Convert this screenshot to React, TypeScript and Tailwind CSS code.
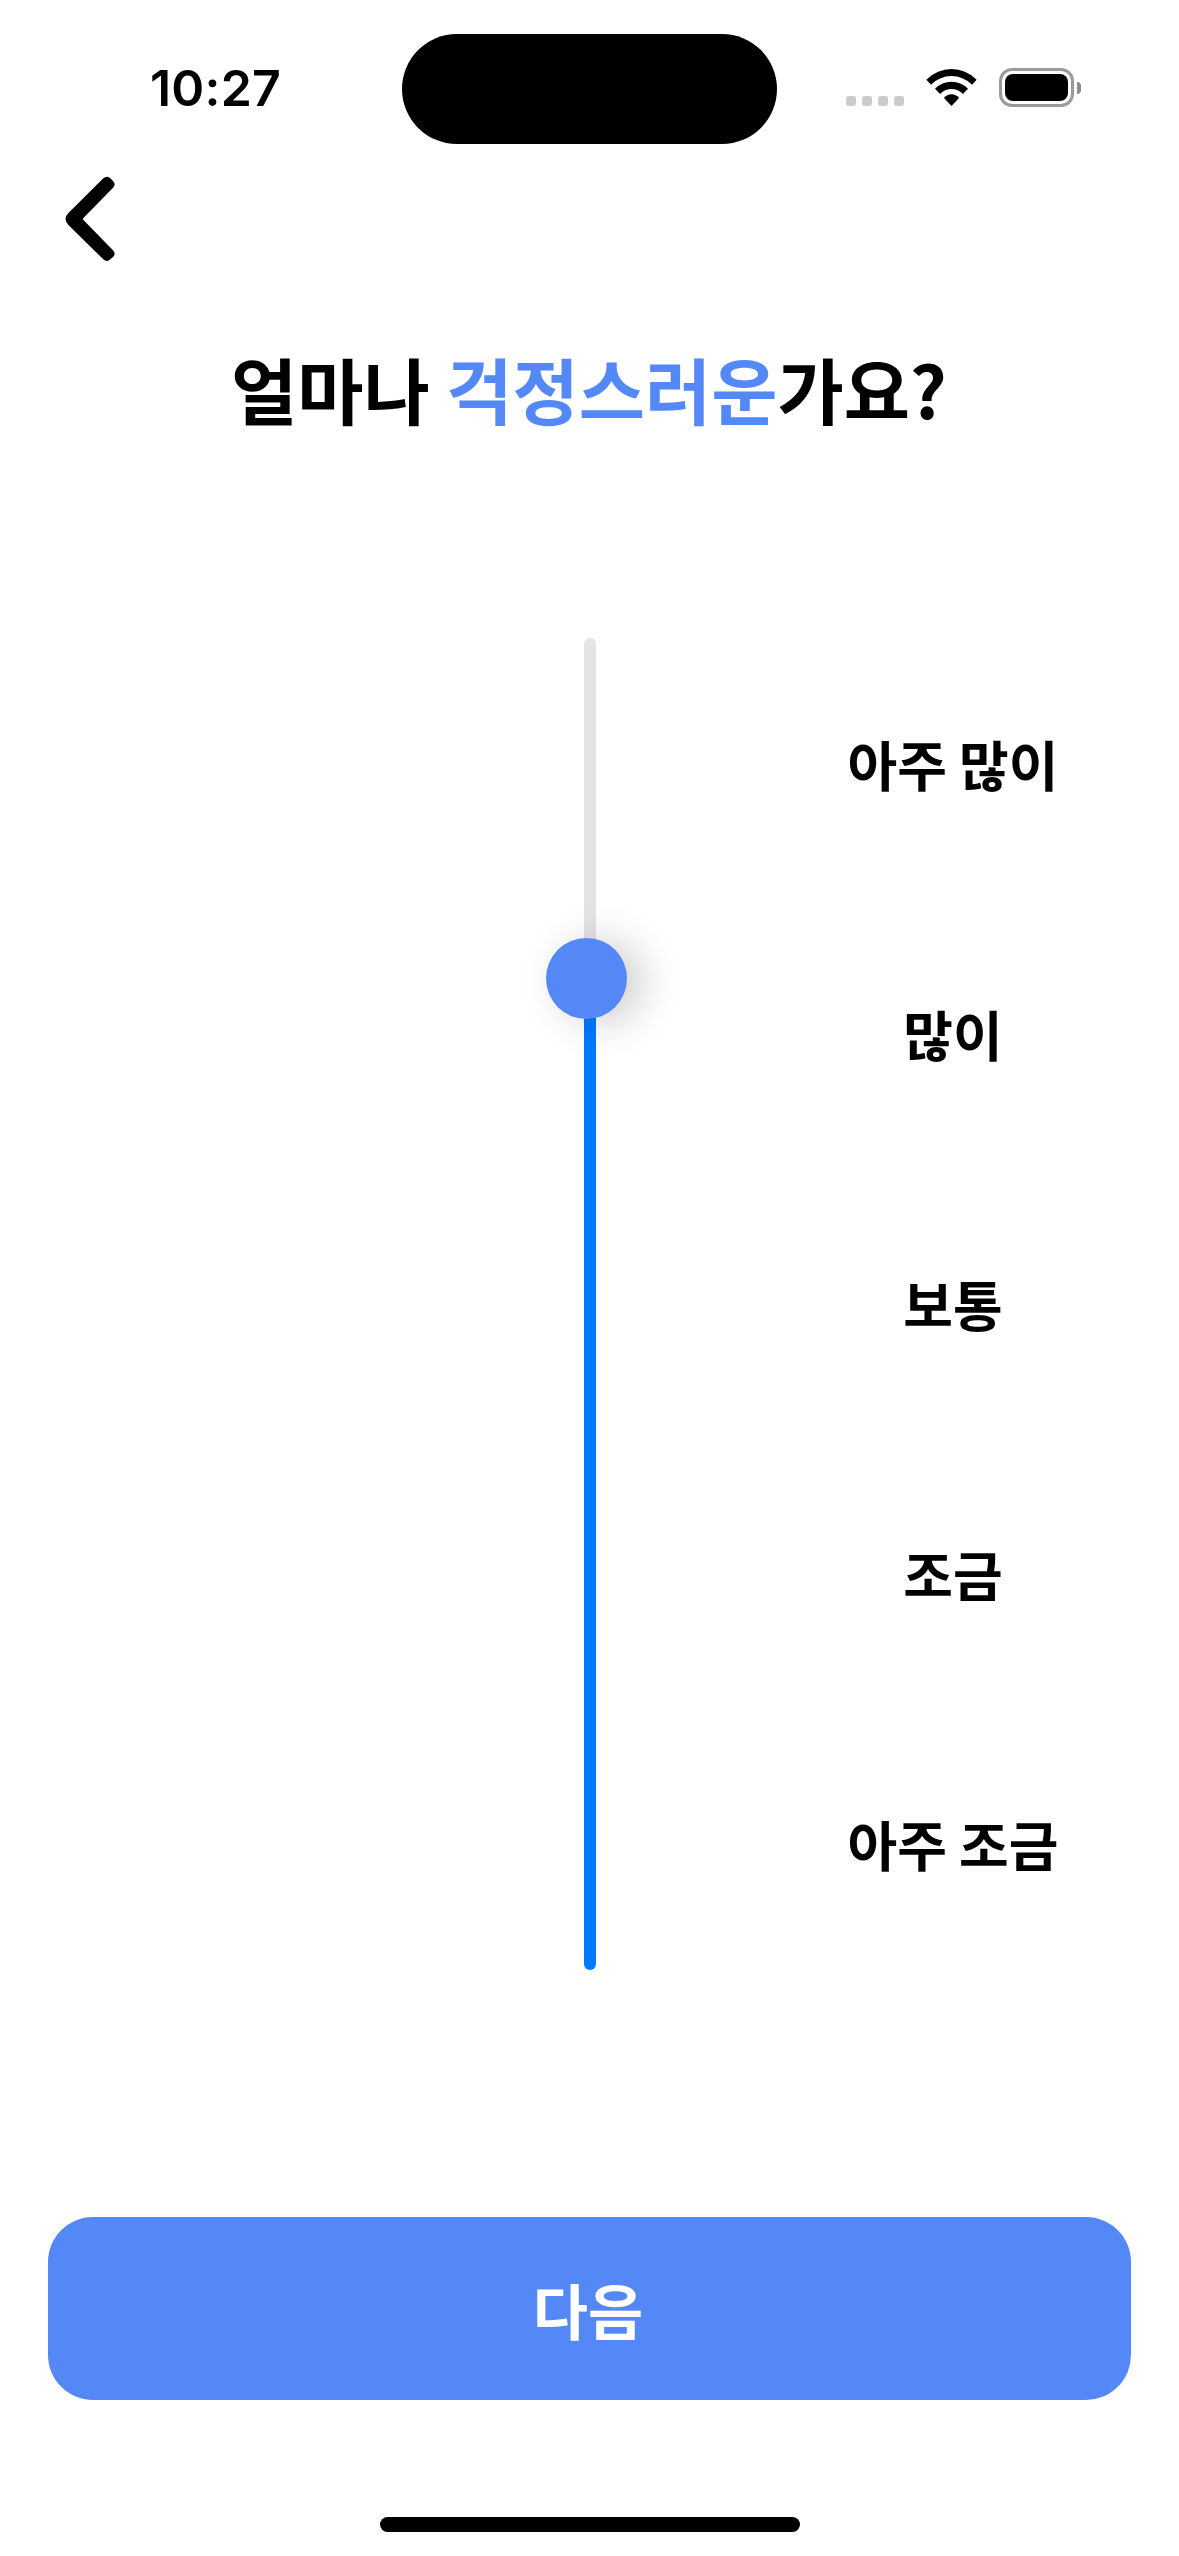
const LEVELS = ['아주 많이', '많이', '보통', '조금', '아주 조금'];

function StatusBar() {
  return (
    <header className="flex h-[144px] items-start">
      <div className="flex w-[402px] shrink-0 pl-[150px] pt-[58px]">
        <span className="font-['Inter'] text-[50px] font-semibold leading-[60px] tracking-[0.2px]">10:27</span>
      </div>
      <div className="mt-[34px] h-[110px] w-[375px] shrink-0 rounded-full bg-black" />
      <div className="ml-[69px] mt-[68px] flex h-[39px] items-start">
        <div className="mt-7 flex gap-1.5">
          {[0, 1, 2, 3].map((i) => (
            <span key={i} className="size-2.5 rounded-[3px] bg-[#cccccc]" />
          ))}
        </div>
        <svg className="ml-[22px] mt-px h-[37px] w-[51px]" viewBox="378 147 153 111">
          <path d="M379 179 Q412 147 454.500 147 Q497 147 530 179 L516 194 Q489 168 454.500 168 Q420 168 393 194 Z" />
          <path d="M405 206 Q426 185 454.500 185 Q483 185 504 206 L489 222 Q474 207 454.500 207 Q435 207 420 222 Z" />
          <path d="M432 234 Q441 223 454.500 223 Q468 223 477 234 L454.500 258 Z" />
        </svg>
        <div className="ml-[22px] flex items-center">
          <div className="h-[39px] w-[75px] rounded-[13px] border-[3px] border-[#9a9a9a] p-[3px]">
            <div className="size-full rounded-[8px] bg-black" />
          </div>
          <div className="ml-[3px] h-3 w-1 rounded-r-full bg-[#8c8c8c]" />
        </div>
      </div>
    </header>
  );
}

function Slider() {
  return (
    <div className="relative h-[1332px] w-3 overflow-visible rounded-full bg-[#e4e4e6]">
      <div className="absolute inset-x-0 bottom-0 h-[991px] rounded-b-full bg-[#007aff]" />
      <div className="absolute left-[-38px] top-[300px] size-[81px] rounded-full bg-[#5588f7] shadow-[15px_3px_42px_rgba(0,0,0,0.2)]" />
    </div>
  );
}

export default function App() {
  return (
    <div className="flex h-[2556px] w-[1179px] flex-col overflow-hidden bg-white font-['Noto_Sans_CJK_KR',sans-serif] text-black">
      <StatusBar />
      <nav className="flex h-[150px] items-start pl-[63px] pt-[30px]">
        <button aria-label="뒤로">
          <svg className="h-[90px] w-[54px]" viewBox="69 462 162 270">
            <path d="M86 578 L190 475 Q201 465 211 475 L219 483 Q229 493 219 503 L131 593 Q127 597 131 601 L219 691 Q229 701 219 711 L211 718 Q201 728 190 718 L86 616 Q67 597 86 578 Z" />
          </svg>
        </button>
      </nav>
      <h1 className="mr-px mt-[42px] h-[104px] whitespace-pre text-center text-[72px] font-bold leading-[104px]">
        얼마나 <span className="text-[#5588f7]">걱정스러운</span>가요?
      </h1>
      <main className="mt-[198px] flex h-[1332px]">
        <div className="w-[584px] shrink-0" />
        <Slider />
        <ul className="ml-[206px] flex w-[302px] flex-col">
          {LEVELS.map((label) => (
            <li key={label} className="h-[270px] shrink-0 text-center text-[54px] font-bold leading-[252px]">
              {label}
            </li>
          ))}
        </ul>
      </main>
      <button className="mx-12 mt-[247px] h-[183px] rounded-[45px] bg-[#5588f7] pr-[3px] text-[60px] font-bold text-white">
        다음
      </button>
      <div className="mx-auto mt-[117px] h-[15px] w-[420px] rounded-full bg-black" />
    </div>
  );
}
